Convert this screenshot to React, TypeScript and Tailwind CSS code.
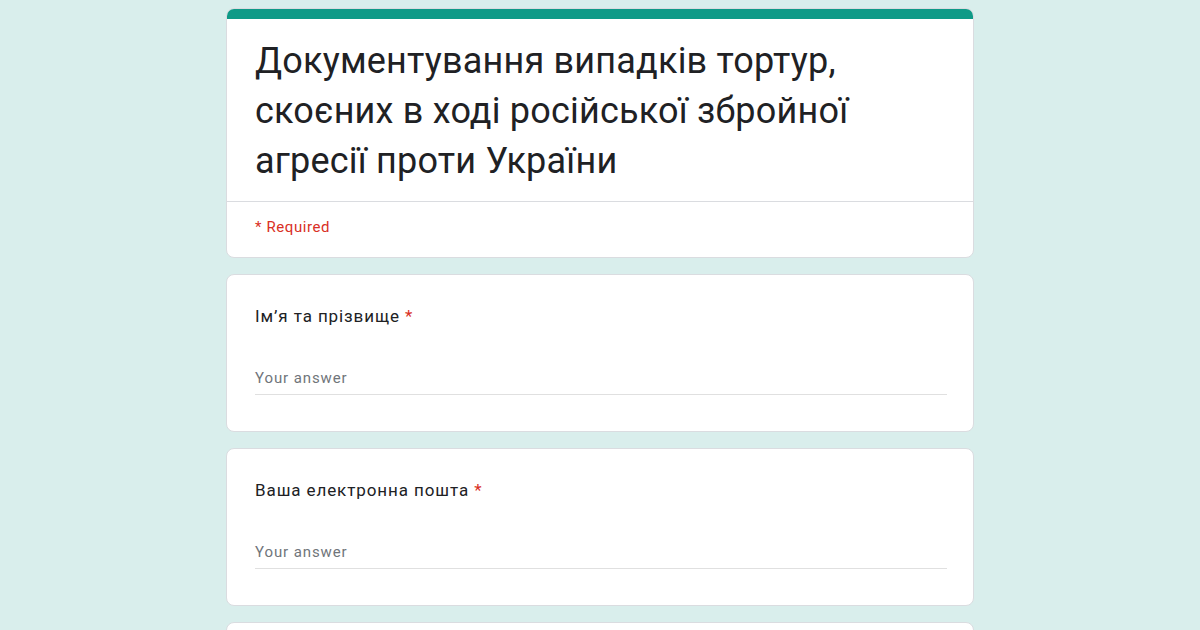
import React from "react";

const Question = ({ label }: { label: string }) => (
  <div className="w-[748px] bg-white rounded-lg border border-[#dadce0] px-[28px] pt-[29px] pb-[36px]">
    <div className="text-[17px] leading-6 text-[#202124] tracking-[0.9px]">
      {label} <span className="text-[#d93025]">*</span>
    </div>
    <div className="mt-[38px] text-[15px] leading-6 text-[#70757a] tracking-[0.9px]">Your answer</div>
    <div className="mt-[4px] h-px w-[692px] bg-[#e0e0e0]" />
  </div>
);

export default function App() {
  return (
    <div
      className="w-[1200px] h-[630px] overflow-hidden bg-[#d9eeec] flex flex-col items-center gap-4 pt-2"
      style={{ fontFamily: "Roboto, 'Noto Sans', sans-serif" }}
    >
      <div className="w-[748px] bg-white rounded-lg border border-[#dadce0] overflow-hidden shrink-0">
        <div className="h-[10px] bg-[#0f9a87]" />
        <div className="px-[28px] pt-[17px] pb-[15px] border-b border-[#dadce0]">
          <h1 className="text-[36px] leading-[50px] text-[#202124] tracking-[0.2px]">
            Документування випадків тортур, скоєних в ході російської збройної агресії проти України
          </h1>
        </div>
        <div className="px-[28px] pt-[15px] pb-[20px] text-[15px] leading-5 text-[#d93025] tracking-[0.6px]">
          * Required
        </div>
      </div>
      <div className="shrink-0">
        <Question label="Ім’я та прізвище" />
      </div>
      <div className="shrink-0">
        <Question label="Ваша електронна пошта" />
      </div>
      <div className="w-[748px] h-[100px] bg-white rounded-lg border border-[#dadce0] shrink-0" />
    </div>
  );
}
